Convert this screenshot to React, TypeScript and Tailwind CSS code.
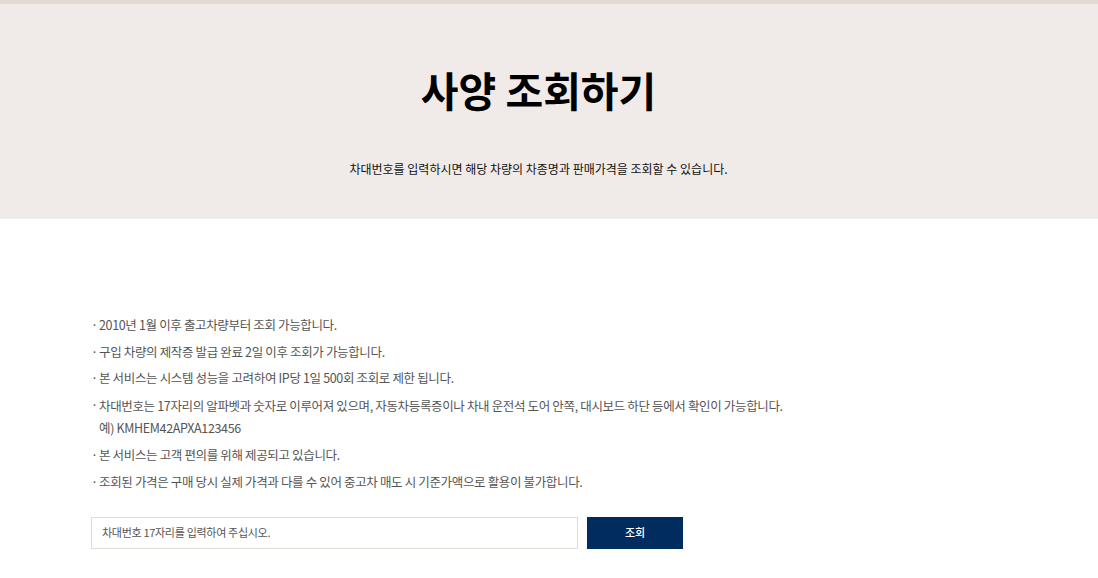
import React from "react";

const items: React.ReactNode[] = [
  "2010년 1월 이후 출고차량부터 조회 가능합니다.",
  "구입 차량의 제작증 발급 완료 2일 이후 조회가 가능합니다.",
  "본 서비스는 시스템 성능을 고려하여 IP당 1일 500회 조회로 제한 됩니다.",
  <>
    차대번호는 17자리의 알파벳과 숫자로 이루어져 있으며, 자동차등록증이나 차내 운전석 도어 안쪽, 대시보드 하단 등에서 확인이 가능합니다.
    <br />
    예) KMHEM42APXA123456
  </>,
  "본 서비스는 고객 편의를 위해 제공되고 있습니다.",
  "조회된 가격은 구매 당시 실제 가격과 다를 수 있어 중고차 매도 시 기준가액으로 활용이 불가합니다.",
];

export default function App() {
  return (
    <div
      className="w-[1098px] min-h-[578px] bg-white"
      style={{ fontFamily: '"Noto Sans CJK KR", "Noto Sans", sans-serif' }}
    >
      <div className="h-[4px] bg-[#e3dbd3]" />
      <div className="h-[215px] bg-[#f0ebe8] flex flex-col items-center pr-[21px]">
        <h1 className="mt-[57px] text-[41px] leading-[56px] font-bold text-black">
          사양 조회하기
        </h1>
        <p className="mt-[42px] text-[12px] leading-[20px] text-[#111]">
          차대번호를 입력하시면 해당 차량의 차종명과 판매가격을 조회할 수 있습니다.
        </p>
      </div>
      <div className="w-[916px] mx-auto pt-[96px]">
        <ul className="flex flex-col gap-[6.5px] text-[12.5px] leading-[20px] text-[#555] tracking-[-0.35px]">
          {items.map((it, i) => (
            <li key={i} className="flex">
              <span className="w-[8px] shrink-0">·</span>
              <span className={i === 3 ? "leading-[22px]" : ""}>{it}</span>
            </li>
          ))}
        </ul>
        <div className="mt-[25px] flex gap-[9px]">
          <div className="w-[487px] h-[32px] border border-[#e3dbd3] flex items-center px-[10px] text-[11px] tracking-[-0.3px] text-[#555]">
            차대번호 17자리를 입력하여 주십시오.
          </div>
          <button className="w-[96px] h-[32px] bg-[#002c5f] text-white text-[11px] font-medium">
            조회
          </button>
        </div>
      </div>
    </div>
  );
}
